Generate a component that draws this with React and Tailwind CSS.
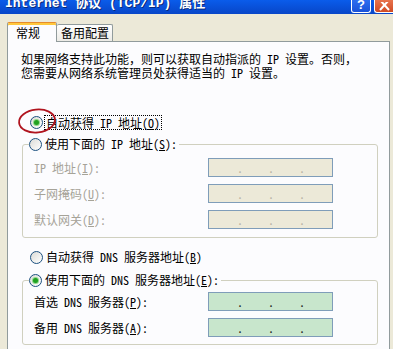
import React from 'react';

const CJK = "font-['Noto_Sans_CJK_SC',sans-serif] [font-feature-settings:'hwid']";

function P({ c }) {
  // full-width punctuation keeps its full width
  return <span className="[font-feature-settings:normal]">{c}</span>;
}

function Radio({ checked }) {
  return (
    <span className="flex h-[13px] w-[13px] shrink-0 items-center justify-center rounded-full border border-[#1C5180] bg-gradient-to-br from-[#DCDCD7] to-white">
      {checked && <span className="h-[5px] w-[5px] rounded-full bg-[#21A121] shadow-[0_0_0_1px_#8ED88A]" />}
    </span>
  );
}

function Key({ k }) {
  return <>(<u className="underline-offset-1">{k}</u>)</>;
}

function IpBox({ green }) {
  return (
    <div
      className={`flex h-[19px] w-[125px] shrink-0 border border-[#7F9DB9] pl-[3px] leading-[17px] ${
        green ? 'bg-[#C8E6CC] text-[#202020]' : 'bg-[#ECE9D8] text-[#B8B4A4]'
      }`}
    >
      <span className="w-[31px] text-right">.</span>
      <span className="w-[31px] text-right">.</span>
      <span className="w-[31px] text-right">.</span>
    </div>
  );
}

function Row({ label, green, disabled }) {
  return (
    <div className="flex h-[19px] items-center">
      <span className={`w-[174px] shrink-0 ${disabled ? 'text-[#A6A398]' : 'text-black'}`}>{label}</span>
      <IpBox green={green} />
    </div>
  );
}

export default function App() {
  return (
    <div className={`relative flex h-[349px] w-[393px] flex-col overflow-hidden bg-[#ECE9D8] text-[12px] leading-[14px] text-black ${CJK}`}>
      {/* title bar */}
      <div className="flex h-[14px] shrink-0 items-start justify-between overflow-hidden bg-gradient-to-b from-[#0A5CEB] to-[#0846C8]">
        <div className="-mt-[4px] pl-[5px] font-['Liberation_Mono','Noto_Sans_CJK_SC',monospace] text-[13px] font-bold leading-[15px] text-white [text-shadow:1px_1px_0_#0A2A7A]">
          Internet 协议 (TCP/IP) 属性
        </div>
        <div className="flex gap-[3px]">
          <div className="flex h-[13px] w-[20px] items-end justify-center rounded-b-[3px] border-x border-b border-white bg-gradient-to-b from-[#2C6DF0] to-[#1A52D8] pb-[1px] font-['Liberation_Sans',sans-serif] text-[13px] font-bold leading-[13px] text-white">
            ?
          </div>
          <div className="flex h-[13px] w-[19px] items-end justify-center rounded-bl-[3px] border-b border-l border-white bg-gradient-to-b from-[#E8734C] to-[#D04A24] pb-[1px]">
            <svg width="11" height="9" viewBox="0 0 11 9">
              <path d="M1 -2 L10 8 M10 -2 L1 8" stroke="white" strokeWidth="2" />
            </svg>
          </div>
        </div>
      </div>

      {/* tabs */}
      <div className="mt-[8px] flex h-[19px] shrink-0 items-end pl-[7px]">
        <div className="relative z-10 -mb-px flex h-[20px] w-[50px] items-center rounded-t-[2px] border-x border-t border-x-[#919B9C] border-t-[#E68B2C] bg-[#FCFCFE] pl-[8px] shadow-[inset_0_2px_0_#FFC83C]">
          常规
        </div>
        <div className="flex h-[17px] w-[56px] items-center rounded-t-[2px] border-r border-t border-[#919B9C] bg-gradient-to-b from-white to-[#ECEBE6] pl-[4px]">
          备用配置
        </div>
      </div>

      {/* panel */}
      <div className="ml-[7px] h-[320px] w-[383px] shrink-0 border border-[#919B9C] bg-[#FCFCFE] pl-[13px] pt-[10px]">
        <p className="whitespace-nowrap">
          如果网络支持此功能<P c="，" />则可以获取自动指派的 IP 设置<P c="。" />否则<P c="，" />
          <br />
          您需要从网络系统管理员处获得适当的 IP 设置<P c="。" />
        </p>

        <div className="ml-[9px] mt-[34px] flex h-[16px] items-center gap-[1px]">
          <Radio checked />
          <span className="border border-dotted border-black px-[1px] leading-[13px]">
            自动获得 IP 地址<Key k="O" />
          </span>
        </div>

        <fieldset className="ml-[1px] mt-[6px] w-[356px] rounded-[3px] border border-[#D0D0BF] pb-[8px] pt-[6px]">
          <legend className="ml-[6px] flex h-[16px] items-center gap-[3px] pr-[2px]">
            <Radio />
            <span>使用下面的 IP 地址<Key k="S" />:</span>
          </legend>
          <div className="flex flex-col gap-[7px] pl-[11px]">
            <Row disabled label={<>IP 地址<Key k="I" />:</>} />
            <Row disabled label={<>子网掩码<Key k="U" />:</>} />
            <Row disabled label={<>默认网关<Key k="D" />:</>} />
          </div>
        </fieldset>

        <div className="ml-[9px] mt-[11px] flex h-[16px] items-center gap-[3px]">
          <Radio />
          <span>自动获得 DNS 服务器地址<Key k="B" /></span>
        </div>

        <fieldset className="ml-[1px] mt-[7px] w-[356px] rounded-[3px] border border-[#D0D0BF] pb-[7px] pt-[4px]">
          <legend className="ml-[6px] flex h-[16px] items-center gap-[3px] pr-[2px]">
            <Radio checked />
            <span>使用下面的 DNS 服务器地址<Key k="E" />:</span>
          </legend>
          <div className="flex flex-col gap-[7px] pl-[11px]">
            <Row green label={<>首选 DNS 服务器<Key k="P" />:</>} />
            <Row green label={<>备用 DNS 服务器<Key k="A" />:</>} />
          </div>
        </fieldset>
      </div>

      {/* red annotation ellipse */}
      <svg className="absolute left-[17px] top-[106px]" width="42" height="30" viewBox="0 0 42 30">
        <ellipse cx="20" cy="15" rx="18" ry="11.5" transform="rotate(-6 20 15)" fill="none" stroke="#B0141E" strokeWidth="1.8" />
      </svg>
    </div>
  );
}
